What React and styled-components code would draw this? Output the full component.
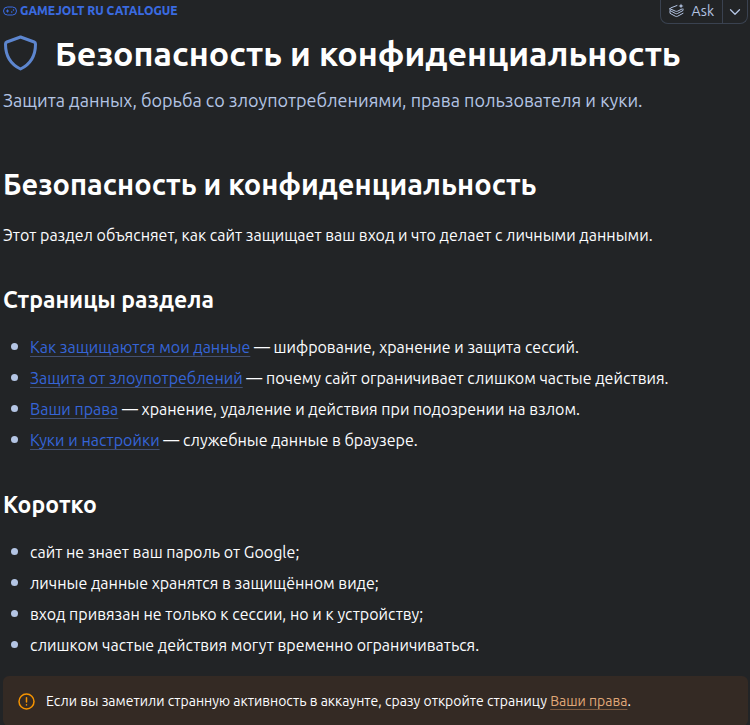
import React from 'react'
import styled, { createGlobalStyle } from 'styled-components';


const GlobalStyle = createGlobalStyle`
    body{
        margin: 0;
        background-color: #222426;
        color: #fcfdff;
        font-family: Ubuntu, 'Noto Sans', 'Open Sans', sans-serif;
        font-size: 16px;
        line-height: 24px;
    }
    h1, h2, h3, p, ul{
        margin: 0;
    }
    h1, h2, h3{
        color: white;
        font-weight: 700;
    }
`;

const Page = styled.main`
    padding: 0 2px 0 3px;
`;

const Header = styled.header`
    padding-bottom: 52px;
`;

const TopRow = styled.div`
    display: flex;
    justify-content: space-between;
    align-items: flex-start;
    height: 24px;
`;

const Crumb = styled.a`
    display: flex;
    align-items: center;
    gap: 3px;
    color: #3a6be0;
    font-size: 12px;
    font-weight: 800;
    line-height: 22px;
    text-decoration: none;
    text-transform: uppercase;
`;

const AskGroup = styled.div`
    display: flex;
    height: 24px;
    box-sizing: border-box;
    border: 1px solid #3a4250;
    border-top: none;
    border-radius: 0 0 8px 8px;
`;

const AskButton = styled.button`
    display: flex;
    align-items: center;
    gap: 8px;
    padding: 0 8px 2px;
    border: none;
    background: none;
    color: #b4c5e4;
    font: inherit;
    font-size: 14px;

    & + &{
        padding: 0 6px;
        border-left: 1px solid #3a4250;
    }
`;

const TitleRow = styled.div`
    display: flex;
    align-items: center;
    gap: 17px;
    padding-top: 7px;
`;

const Title = styled.h1`
    font-size: 34px;
    line-height: 44px;
`;

const Lead = styled.p`
    padding-top: 12px;
    color: #b4c5e4;
    font-size: 18px;
    line-height: 26px;
`;

const SectionTitle = styled.h2`
    font-size: 29px;
    line-height: 38px;
    padding-bottom: 20px;
`;

const SubTitle = styled.h3`
    font-size: 23px;
    line-height: 32px;
    padding: 37px 0 19px;
`;

const List = styled.ul`
    display: flex;
    flex-direction: column;
    gap: 7px;
    padding: 0;
    list-style: none;
`;

const Item = styled.li`
    display: flex;
    gap: 12px;
    padding-left: 8px;

    &::before{
        content: '';
        flex: none;
        width: 7px;
        height: 7px;
        margin-top: 8px;
        border-radius: 50%;
        background-color: #b4c5e4;
    }
`;

const TextLink = styled.a`
    color: ${({ $warm }) => ($warm ? '#e0a878' : '#3565d8')};
    text-decoration: underline;
    text-decoration-color: ${({ $warm }) => ($warm ? '#7c5a40' : '#435070')};
    text-decoration-thickness: 1px;
    text-underline-offset: 3px;
`;

const Hint = styled.aside`
    display: flex;
    align-items: center;
    gap: 11px;
    margin-top: 19px;
    padding: 13px 15px;
    border-radius: 6px;
    background-color: #342a24;
    font-size: 14px;
`;

const pages = [
    { name: 'Как защищаются мои данные', url: '#data', text: 'шифрование, хранение и защита сессий.' },
    { name: 'Защита от злоупотреблений', url: '#abuse', text: 'почему сайт ограничивает слишком частые действия.' },
    { name: 'Ваши права', url: '#rights', text: 'хранение, удаление и действия при подозрении на взлом.' },
    { name: 'Куки и настройки', url: '#cookies', text: 'служебные данные в браузере.' },
];

const facts = [
    'сайт не знает ваш пароль от Google;',
    'личные данные хранятся в защищённом виде;',
    'вход привязан не только к сессии, но и к устройству;',
    'слишком частые действия могут временно ограничиваться.',
];

const GamepadIcon = () => (
    <svg width="14" height="10" viewBox="0 0 14 10" fill="none" stroke="currentColor" aria-hidden="true">
        <rect x="0.5" y="1" width="13" height="8" rx="4" />
        <path d="M4.5 3.5v3M3 5h3" />
        <circle cx="10.5" cy="4" r="0.4" />
        <circle cx="8.8" cy="6" r="0.4" />
    </svg>
);

const ShieldIcon = () => (
    <svg width="35" height="36" viewBox="0 0 35 36" fill="none" stroke="#5d86cf" strokeWidth="3" strokeLinejoin="round" aria-hidden="true">
        <path d="M17.5 2 31.2 7Q32.5 7.5 32.5 9C32.5 19.5 28 29 17.5 34C7 29 2.5 19.5 2.5 9Q2.5 7.5 3.8 7Z" />
    </svg>
);

const AskIcon = () => (
    <svg width="15" height="15" viewBox="0 0 15 15" fill="none" stroke="currentColor" strokeLinecap="round" strokeLinejoin="round" aria-hidden="true">
        <path d="M8 2.5 1.5 5Q.5 5.5 1.5 6L6.5 8.2Q7.5 8.6 8.5 8.2L13 6" />
        <path d="M1 5.5v2L6.5 10.5Q7.5 11 8.5 10.5L14 7.5V6" />
        <path d="M1 8v2.3L6.5 13.3Q7.5 13.8 8.5 13.3L14 10.3" />
        <path d="M12 .5 12.7 2.3 14.5 3 12.7 3.7 12 5.5 11.3 3.7 9.5 3 11.3 2.3Z" fill="currentColor" stroke="none" />
    </svg>
);

const ChevronIcon = () => (
    <svg width="12" height="12" viewBox="0 0 12 12" fill="none" stroke="currentColor" strokeWidth="1.3" strokeLinecap="round" strokeLinejoin="round" aria-hidden="true">
        <path d="M1.5 3.8 6 8.3l4.5-4.5" />
    </svg>
);

const AlertIcon = () => (
    <svg width="17" height="17" viewBox="0 0 17 17" fill="none" stroke="#f59300" strokeWidth="1.5" strokeLinecap="round" aria-hidden="true">
        <circle cx="8.5" cy="8.5" r="7.5" />
        <path d="M8.5 4.8v4.2M8.5 11.8v.1" />
    </svg>
);

const App = () => {
    return (
        <>
        <GlobalStyle />
        <Page>
            <Header>
                <TopRow>
                    <Crumb href="#catalogue"><GamepadIcon />Gamejolt RU catalogue</Crumb>
                    <AskGroup>
                        <AskButton type="button"><AskIcon />Ask</AskButton>
                        <AskButton type="button" aria-label="More"><ChevronIcon /></AskButton>
                    </AskGroup>
                </TopRow>
                <TitleRow>
                    <ShieldIcon />
                    <Title>Безопасность и конфиденциальность</Title>
                </TitleRow>
                <Lead>Защита данных, борьба со злоупотреблениями, права пользователя и куки.</Lead>
            </Header>
            <SectionTitle>Безопасность и конфиденциальность</SectionTitle>
            <p>Этот раздел объясняет, как сайт защищает ваш вход и что делает с личными данными.</p>
            <SubTitle>Страницы раздела</SubTitle>
            <List>
                {pages.map((page) => (
                    <Item key={page.url}>
                        <span><TextLink href={page.url}>{page.name}</TextLink> — {page.text}</span>
                    </Item>
                ))}
            </List>
            <SubTitle>Коротко</SubTitle>
            <List>
                {facts.map((fact) => (
                    <Item key={fact}>{fact}</Item>
                ))}
            </List>
            <Hint>
                <AlertIcon />
                <p>Если вы заметили странную активность в аккаунте, сразу откройте страницу <TextLink href="#rights" $warm>Ваши права</TextLink>.</p>
            </Hint>
        </Page>
        </>
    );
}

export default App;
